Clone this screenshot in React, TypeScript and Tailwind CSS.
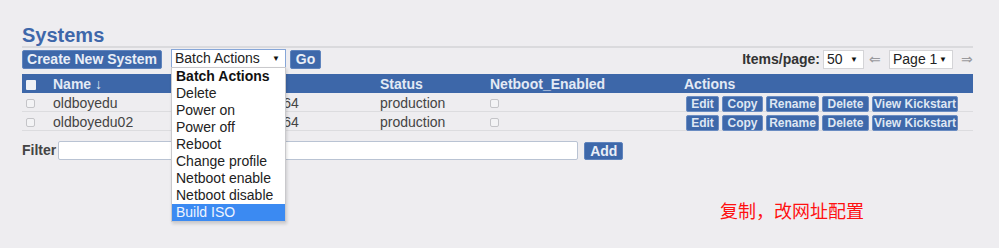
const systems = [
  { name: 'oldboyedu', profile: 'CentOS-7-x86_64', status: 'production' },
  { name: 'oldboyedu02', profile: 'CentOS-7-x86_64', status: 'production' },
]

const batchActions = [
  'Delete',
  'Power on',
  'Power off',
  'Reboot',
  'Change profile',
  'Netboot enable',
  'Netboot disable',
  'Build ISO',
]

const rowActions = [
  { label: 'Edit', w: 'w-[33px]' },
  { label: 'Copy', w: 'w-[41px]' },
  { label: 'Rename', w: 'w-[53px]' },
  { label: 'Delete', w: 'w-[47px]' },
  { label: 'View Kickstart', w: 'w-[86px]' },
]

function Checkbox({ header = false }: { header?: boolean }) {
  return (
    <span
      className={
        header
          ? 'inline-block w-[10px] h-[10px] bg-[#eef1f6] rounded-[1px]'
          : 'inline-block w-[9px] h-[9px] bg-[#f3f3f5] border border-[#c4c4c8] rounded-[2px]'
      }
    />
  )
}

function Caret() {
  return <span className="text-[8px] leading-none text-[#111]">▼</span>
}

export default function App() {
  return (
    <div className="min-h-[248px] bg-[#eeedf0] px-[22px] pt-[24px] font-['Liberation_Sans',Arial,sans-serif] text-[14px] text-[#333] w-[999px]">
      <h1 className="text-[20px] leading-[22px] font-bold text-[#3e67aa] border-b-2 border-[#dadadd] w-[951px]">
        Systems
      </h1>

      {/* toolbar */}
      <div className="flex items-center h-[21px] mt-[1px] w-[951px]">
        <button className="w-[140px] h-[19px] bg-[#3e68aa] border border-[#5f84bd] rounded-[2px] text-[14px] leading-[17px] font-bold text-[#e9eef7]">
          Create New System
        </button>
        <div className="relative ml-[9px] -mt-[2px]">
          <div className="w-[115px] h-[19px] bg-white border border-[#86a6d8] flex items-center justify-between pl-[3px] pr-[5px] text-[14px] text-[#222]">
            <span>Batch Actions</span>
            <Caret />
          </div>
          <div className="absolute left-0 top-[18px] w-[115px] bg-white border border-[#c9c9cc] shadow-[1px_2px_3px_rgba(0,0,0,0.15)] z-10 text-[14px] text-[#222]">
            <div className="h-[17px] leading-[17px] pl-[4px] font-bold text-[#111]">Batch Actions</div>
            {batchActions.map((a) => (
              <div
                key={a}
                className={
                  a === 'Build ISO'
                    ? 'h-[17px] leading-[17px] pl-[4px] bg-[#3b8af2] text-[#eef4ff]'
                    : 'h-[17px] leading-[17px] pl-[4px]'
                }
              >
                {a}
              </div>
            ))}
          </div>
        </div>
        <button className="ml-[4px] w-[31px] h-[19px] bg-[#3e68aa] border border-[#5f84bd] rounded-[2px] text-[14px] leading-[17px] font-bold text-[#e9eef7]">
          Go
        </button>

        <div className="ml-auto flex items-center">
          <span className="font-bold text-[#333]">Items/page:</span>
          <div className="ml-[3px] w-[41px] h-[19px] bg-white border border-[#d4d4d7] flex items-center justify-between pl-[3px] pr-[5px] text-[#222]">
            <span>50</span>
            <Caret />
          </div>
          <span className="ml-[5px] text-[#9a9a9e] text-[14px]">⇐</span>
          <div className="ml-[8px] w-[64px] h-[19px] bg-white border border-[#d4d4d7] flex items-center justify-between pl-[3px] pr-[5px] text-[#222]">
            <span>Page 1</span>
            <Caret />
          </div>
          <span className="ml-[8px] text-[#9a9a9e] text-[14px]">⇒</span>
        </div>
      </div>

      {/* table */}
      <div className="mt-[4px] w-[951px]">
        <div className="grid grid-cols-[31px_142px_185px_110px_194px_1fr] h-[19px] items-center bg-[#3d67a9] font-bold text-[14px] text-[#e3eaf5]">
          <div className="pl-[4px] flex items-center">
            <Checkbox header />
          </div>
          <div>Name ↓</div>
          <div>Profile</div>
          <div>Status</div>
          <div>Netboot_Enabled</div>
          <div>Actions</div>
        </div>
        {systems.map((s) => (
          <div
            key={s.name}
            className="grid grid-cols-[31px_142px_185px_110px_194px_1fr] h-[19px] items-center border-b border-[#dcdcdf] text-[#444]"
          >
            <div className="pl-[4px] flex items-center">
              <Checkbox />
            </div>
            <div>{s.name}</div>
            <div className="-ml-[9px]">{s.profile}</div>
            <div>{s.status}</div>
            <div className="flex items-center">
              <Checkbox />
            </div>
            <div className="flex items-center gap-[3px] pl-[2px]">
              {rowActions.map((b) => (
                <button
                  key={b.label}
                  className={`${b.w} h-[16px] bg-[#3e68aa] border border-[#6a8cc2] rounded-[2px] text-[12px] leading-[14px] font-bold text-[#dfe7f3]`}
                >
                  {b.label}
                </button>
              ))}
            </div>
          </div>
        ))}
      </div>

      {/* filter */}
      <div className="flex items-center mt-[9px] h-[21px]">
        <span className="font-bold text-[#444]">Filter</span>
        <input className="ml-[2px] w-[520px] h-[19px] bg-white border border-[#b9c3d3] rounded-[2px] outline-none" />
        <button className="ml-[6px] w-[39px] h-[18px] bg-[#3e68aa] border border-[#5f84bd] rounded-[2px] text-[14px] leading-[16px] font-bold text-[#e9eef7]">
          Add
        </button>
      </div>

      <div className="mt-[39px] ml-[698px] text-[18px] leading-[20px] text-[#ff1010] font-['Noto_Sans_CJK_SC',sans-serif]">
        复制，改网址配置
      </div>
    </div>
  )
}
